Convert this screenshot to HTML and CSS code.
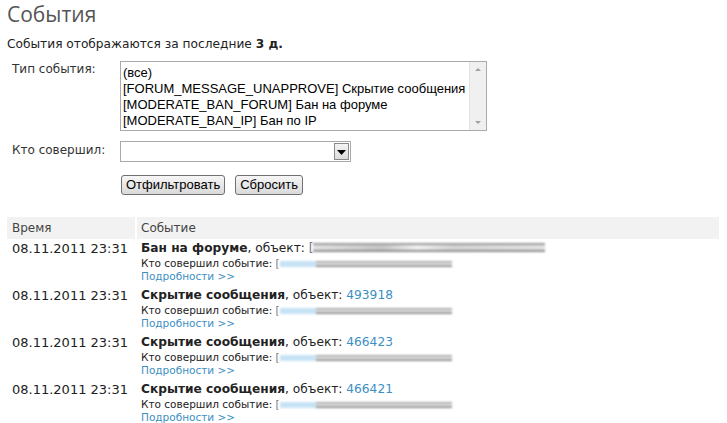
FILE: index.html
```html
<!DOCTYPE html>
<html lang="ru">
<head>
<meta charset="utf-8">
<title>События</title>
<link rel="stylesheet" href="styles.css">
</head>
<body>
<h1 class="title">События</h1>
<p class="note">События отображаются за последние <b>3 д.</b></p>

<form class="filter">
  <div class="frow">
    <label class="flabel">Тип события:</label>
    <div class="listbox">
      <div class="opts">
        <div>(все)</div>
        <div>[FORUM_MESSAGE_UNAPPROVE] Скрытие сообщения</div>
        <div>[MODERATE_BAN_FORUM] Бан на форуме</div>
        <div>[MODERATE_BAN_IP] Бан по IP</div>
      </div>
      <div class="vscroll">
        <svg width="16" height="68" viewBox="0 0 16 68"><path d="M5 9 L8 6 L11 9 Z" fill="#a0a0a0"/><path d="M5 59 L8 62 L11 59 Z" fill="#a0a0a0"/></svg>
      </div>
    </div>
  </div>
  <div class="frow frow-sel">
    <label class="flabel">Кто совершил:</label>
    <div class="combo">
      <div class="combo-val"></div>
      <div class="combo-btn"><svg width="9" height="5" viewBox="0 0 9 5"><path d="M0 0 H9 L4.5 5 Z" fill="#000"/></svg></div>
    </div>
  </div>
  <div class="btns">
    <span class="btn">Отфильтровать</span>
    <span class="btn">Сбросить</span>
  </div>
</form>

<div class="log">
  <div class="lhead">
    <div class="c-time">Время</div>
    <div class="c-ev">Событие</div>
  </div>
  <div class="lrow">
    <div class="c-time">08.11.2011 23:31</div>
    <div class="c-ev">
      <div class="ev-title"><b>Бан на форуме</b>, объект: <span class="br">[</span><span class="blur blur-obj"></span></div>
      <div class="ev-who">Кто совершил событие: <span class="br lnk">[</span><span class="blur blur-who"></span></div>
      <a class="ev-more">Подробности &gt;&gt;</a>
    </div>
  </div>
  <div class="lrow">
    <div class="c-time">08.11.2011 23:31</div>
    <div class="c-ev">
      <div class="ev-title"><b>Скрытие сообщения</b>, объект: <a class="lnk">493918</a></div>
      <div class="ev-who">Кто совершил событие: <span class="br lnk">[</span><span class="blur blur-who"></span></div>
      <a class="ev-more">Подробности &gt;&gt;</a>
    </div>
  </div>
  <div class="lrow">
    <div class="c-time">08.11.2011 23:31</div>
    <div class="c-ev">
      <div class="ev-title"><b>Скрытие сообщения</b>, объект: <a class="lnk">466423</a></div>
      <div class="ev-who">Кто совершил событие: <span class="br lnk">[</span><span class="blur blur-who"></span></div>
      <a class="ev-more">Подробности &gt;&gt;</a>
    </div>
  </div>
  <div class="lrow">
    <div class="c-time">08.11.2011 23:31</div>
    <div class="c-ev">
      <div class="ev-title"><b>Скрытие сообщения</b>, объект: <a class="lnk">466421</a></div>
      <div class="ev-who">Кто совершил событие: <span class="br lnk">[</span><span class="blur blur-who"></span></div>
      <a class="ev-more">Подробности &gt;&gt;</a>
    </div>
  </div>
</div>
</body>
</html>
```

FILE: styles.css
```css
html, body {
  margin: 0;
  padding: 0;
  background: #fff;
}
body {
  padding: 0 8px 0 7px;
  font-family: "DejaVu Sans", Verdana, sans-serif;
  font-size: 12px;
  color: #222;
  overflow: hidden;
}
.title {
  margin: 0;
  padding-top: 0;
  font-family: "Open Sans", "DejaVu Sans", sans-serif;
  font-weight: 400;
  font-size: 21px;
  line-height: 28px;
  color: #555;
}
.note {
  margin: 8px 0 0 0;
  line-height: 16px;
  font-size: 12.2px;
  color: #222;
}
.filter {
  margin: 9px 0 0 0;
}
.frow {
  display: flex;
  align-items: flex-start;
}
.flabel {
  width: 113px;
  padding-left: 5px;
  box-sizing: border-box;
  line-height: 16px;
  font-size: 12px;
  color: #333;
}
.listbox {
  display: flex;
  width: 367px;
  height: 70px;
  box-sizing: border-box;
  border: 1px solid #aaa;
  background: #fff;
}
.opts {
  flex: 1;
  padding: 3px 0 0 2px;
  font-family: "Liberation Sans", Arial, sans-serif;
  font-size: 13px;
  line-height: 16px;
  color: #000;
  white-space: nowrap;
  overflow: hidden;
}
.vscroll {
  width: 16px;
  background: #f0f0f0;
  border-left: 1px solid #e3e3e3;
}
.vscroll svg { display: block; }
.frow-sel {
  margin-top: 10px;
}
.frow-sel .flabel {
  padding-top: 1px;
}
.combo {
  display: flex;
  width: 231px;
  height: 21px;
  box-sizing: border-box;
  border: 1px solid #aaa;
  background: #fff;
}
.combo-val { flex: 1; }
.combo-btn {
  width: 15px;
  height: 17px;
  margin: 1px;
  box-sizing: border-box;
  border: 1px solid #8a8a8a;
  background: linear-gradient(#f4f4f4, #dcdcdc);
  display: flex;
  align-items: center;
  justify-content: center;
}
.combo-btn svg { display: block; margin-top: 1px; }
.btns {
  display: flex;
  gap: 10px;
  margin: 13px 0 0 114px;
}
.btn {
  display: inline-block;
  height: 20px;
  padding: 0 4px;
  box-sizing: border-box;
  border: 1px solid #707070;
  border-radius: 3px;
  background: linear-gradient(#f6f6f6 0%, #e8e8e8 50%, #d9d9d9 100%);
  font-family: "Liberation Sans", Arial, sans-serif;
  font-size: 13px;
  line-height: 18px;
  color: #000;
}
.log {
  margin-top: 22px;
  width: 712px;
}
.lhead {
  display: flex;
  height: 22px;
  background: #f2f2f2;
  line-height: 22px;
  color: #444;
}
.lhead .c-time {
  border-right: 2px solid #fff;
}
.c-time {
  width: 130px;
  padding-left: 5px;
  box-sizing: border-box;
  flex: none;
}
.c-ev {
  padding-left: 4px;
  flex: 1;
}
.lrow {
  display: flex;
  padding-top: 1px;
  height: 47px;
  box-sizing: border-box;
  color: #222;
}
.lrow .c-time {
  line-height: 16px;
  font-size: 13px;
  padding-top: 1px;
}
.ev-title {
  line-height: 17px;
  font-size: 12.2px;
  white-space: nowrap;
}
.ev-title b { color: #222; }
.lnk { color: #3c8fc4; text-decoration: none; }
.br { color: #777; }
.ev-who {
  font-size: 10.5px;
  line-height: 13px;
  white-space: nowrap;
}
.ev-more {
  display: block;
  font-size: 10.5px;
  line-height: 13px;
  color: #3c8fc4;
}
.blur {
  display: inline-block;
  box-sizing: border-box;
  vertical-align: 0;
  filter: blur(0.9px);
}
.blur-obj {
  width: 232px;
  height: 9px;
  border-top: 2px solid #8a8a8a;
  border-bottom: 2px solid #7a7a7a;
  background: linear-gradient(90deg, #ddd 0%, #bbb 30%, #eee 45%, #ccc 60%, #ddd 100%);
  opacity: 0.85;
}
.blur-who {
  width: 172px;
  height: 6px;
  border-top: 2px solid #999;
  border-bottom: 2px solid #777;
  background: #e6e6e6;
  opacity: 0.8;
}
.blur-who::before {
  content: "";
  display: block;
  width: 36px;
  height: 6px;
  margin-top: -2px;
  background: #b9dcf3;
}
```
